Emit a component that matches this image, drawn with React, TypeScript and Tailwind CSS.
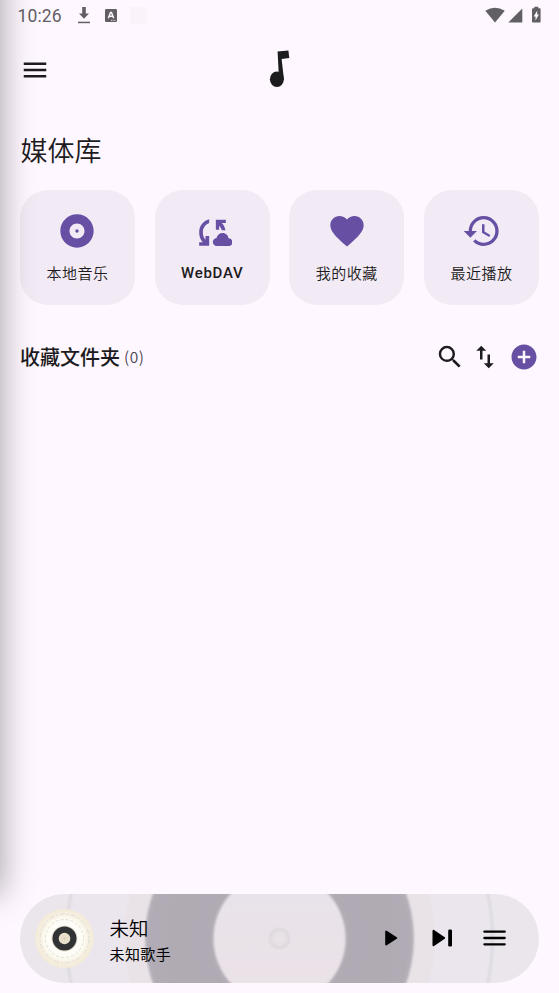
import React from "react";
import {
  MdAddCircle,
  MdAlbum,
  MdFavorite,
  MdHistory,
  MdImportExport,
  MdMenu,
  MdSearch,
} from "react-icons/md";

const CloudSyncIcon = ({ size, color }: { size: number; color: string }) => (
  <svg width={size} height={size} viewBox="5.5 3 120 120" fill={color}>
    <path d="M57 28v11C45 44 38 54 38 67c0 10 3 17 8 22V78h11v29H27V97h11C31 90 27 79 27 67c0-19 12-34 30-39z" />
    <path d="M77 29h30v10H95c6 6 9 13 11 22H95c-2-6-4-10-8-14v12H77z" />
    <path d="M80 108c-7 0-12-5-12-12 0-6 5-11 11-12 2-9 9-15 18-15 10 0 17 7 18 16 7 0 12 5 12 12 0 6-5 11-12 11z" />
  </svg>
);

const cards = [
  { label: "本地音乐", icon: MdAlbum },
  { label: "WebDAV", icon: CloudSyncIcon, latin: true },
  { label: "我的收藏", icon: MdFavorite },
  { label: "最近播放", icon: MdHistory },
];

const StatusBar = () => (
  <div className="flex h-[30px] items-center justify-between pl-[17.5px] pr-[16.5px] text-[#625f64]">
    <div className="flex items-center">
      <span className="w-[59.5px] text-[17.5px] leading-[30px] tracking-[0.15px] pt-[2px]">10:26</span>
      <svg className="h-[17px] w-[14px]" viewBox="0 0 14 17" fill="currentColor">
        <path d="M5.2 0h3.6v6.5h3.2L7 11.8 2 6.5h3.2z" />
        <path d="M1 14.7h12v1.5H1z" />
      </svg>
      <svg className="ml-[14px] h-[13px] w-[12px]" viewBox="0 0 12 13">
        <rect width="12" height="13" rx="1.2" fill="currentColor" />
        <path d="M3.3 9.3 5.5 3.5h1L8.7 9.3M4.2 7.3h3.6" fill="none" stroke="#fef7ff" strokeWidth="1.4" />
        <path d="M6 11.4h5" stroke="#fef7ff" strokeWidth="0.8" strokeDasharray="1 0.6" />
      </svg>
      <div className="ml-[13px] h-[17px] w-[17px] bg-[#faf4fa]" />
    </div>
    <svg className="h-[18px] w-[58px]" viewBox="0 0 58 18" fill="currentColor">
      <path d="M0.3 4.8Q10-1.2 19.8 4.8L10 16.5z" />
      <path d="M37.3 2.5v14H23.3z" />
      <path d="M49.3.7h4v1.6h1.5q.8 0 .8.8v12.6q0 .8-.8.8h-7q-.8 0-.8-.8V3.1q0-.8.8-.8h1.5z" />
      <path d="M52.2 4.7v3.8h1.7L50.5 14.5v-4.1h-1.9z" fill="#fef7ff" />
    </svg>
  </div>
);

const VinylBackdrop = () => (
  <svg className="absolute inset-0 h-full w-full" viewBox="0 0 519 89" preserveAspectRatio="none">
    <defs>
      <linearGradient id="label" x1="0" y1="0" x2="0" y2="1">
        <stop offset="0.15" stopColor="#e8e3ea" />
        <stop offset="0.8" stopColor="#eae2e7" />
      </linearGradient>
      <radialGradient id="vinyl" gradientUnits="userSpaceOnUse" cx="259.5" cy="44.5" r="137">
        <stop offset="0.46" stopColor="#b6b1b9" />
        <stop offset="0.52" stopColor="#afaab3" />
        <stop offset="0.94" stopColor="#b0abb4" />
        <stop offset="1" stopColor="#b9b4bc" />
      </radialGradient>
      <filter id="soft" x="-5%" y="-5%" width="110%" height="110%">
        <feGaussianBlur stdDeviation="1" />
      </filter>
    </defs>
    <rect width="519" height="89" fill="#eae6ec" />
    <g filter="url(#soft)">
      <circle cx="259.5" cy="44.5" r="209" fill="#ebe6ee" />
      <circle cx="259.5" cy="44.5" r="213" fill="none" stroke="#dad6de" strokeWidth="2.2" />
      <circle cx="259.5" cy="44.5" r="156" fill="#e9e3e8" />
      <circle cx="259.5" cy="44.5" r="134.5" fill="url(#vinyl)" />
      <circle cx="259.5" cy="44.5" r="66" fill="url(#label)" />
      <circle cx="259.5" cy="44.5" r="9.5" fill="#e6e0e5" stroke="#dad5da" strokeWidth="2" />
      <circle cx="259.5" cy="44.5" r="4" fill="#e9e3e7" />
    </g>
  </svg>
);

const Cover = () => (
  <svg className="h-[60px] w-[60px]" viewBox="0 0 60 60">
    <defs>
      <radialGradient id="disc">
        <stop offset="0.4" stopColor="#fffefa" />
        <stop offset="0.68" stopColor="#fdfbf1" />
        <stop offset="0.8" stopColor="#f7f1e3" />
        <stop offset="1" stopColor="#f3ead7" />
      </radialGradient>
    </defs>
    <circle cx="29.5" cy="29.5" r="29.5" fill="url(#disc)" />
    <g fill="none" stroke="#cbd0cb" strokeWidth="0.6">
      <circle cx="29.5" cy="29.5" r="24.5" strokeDasharray="5 2 2 2" />
      <circle cx="29.5" cy="29.5" r="19" strokeDasharray="3 2" />
    </g>
    <circle cx="29.5" cy="29.5" r="13" fill="#e5ddcf" />
    <circle cx="29.5" cy="29.5" r="12" fill="#303234" />
    <circle cx="29.5" cy="29.5" r="5.8" fill="#e8dfcb" />
    <circle cx="29.5" cy="29.5" r="0.8" fill="none" stroke="#c5bcae" strokeWidth="0.5" />
  </svg>
);

const Player = () => (
  <div className="relative flex h-[89px] items-center overflow-hidden rounded-full pl-[15px] pr-[32px] text-black">
    <VinylBackdrop />
    <div className="relative flex flex-1 items-center">
      <Cover />
      <div className="ml-[14.5px] pt-[5px]">
        <div className="text-[19.5px] leading-[27px] font-[350]">未知</div>
        <div className="text-[15px] leading-[24px] tracking-[0.4px]">未知歌手</div>
      </div>
    </div>
    <svg className="relative -top-[0.5px] h-[18px] w-[125px]" viewBox="0 0 125 18" fill="#000">
      <path d="M4.2 2.6v12.8L14.2 9z" stroke="#000" strokeWidth="2" strokeLinejoin="round" />
      <path d="M51.5 1.8v14.4L62.2 9z" stroke="#000" strokeWidth="2" strokeLinejoin="round" />
      <rect x="66.2" y="0.5" width="3.8" height="17" rx="1.2" />
      <path d="M102.4 2.7h20.3M102.4 9h20.3M102.4 15.3h20.3" stroke="#000" strokeWidth="2.3" strokeLinecap="round" />
    </svg>
  </div>
);

export default function App() {
  return (
    <div className="relative flex h-[993px] w-[559px] flex-col overflow-hidden bg-[#fef7ff] font-['Roboto','Noto_Sans_CJK_SC',sans-serif] text-[#1d1b20]">
      <StatusBar />

      <header className="grid h-[78px] grid-cols-3 items-center px-[20px]">
        <MdMenu size={30} className="mt-px" />
        <svg className="h-[38px] w-[21px] justify-self-center" viewBox="0 0 21 38" fill="#1c1b1d">
          <path d="M8.6 1.4 19.4.5 20.3 8 12.6 8.9 14.9 29H10z" />
          <ellipse cx="7.9" cy="29.2" rx="7" ry="7.7" />
        </svg>
      </header>

      <main className="flex-1 px-[20px] pt-[24px]">
        <h1 className="pl-[0.5px] text-[27px] leading-[40px] font-[350]">媒体库</h1>

        <div className="mt-[18px] grid grid-cols-4 gap-[19.7px]">
          {cards.map(({ label, icon: Icon, latin }) => (
            <div key={label} className="flex h-[115px] flex-col items-center rounded-[28px] bg-[#f2ebf6] pt-[21px]">
              <Icon size={40} color="#6750a4" />
              <span
                className={`text-[15px] leading-[22px] whitespace-nowrap ${
                  latin ? "mt-[10.5px] font-medium tracking-[0.7px]" : "mt-[11.5px] font-[350] tracking-[0.5px]"
                }`}
              >
                {label}
              </span>
            </div>
          ))}
        </div>

        <div className="mt-[37px] flex h-[30px] items-center">
          <h2 className="pt-[2px] text-[20px] leading-[30px] font-medium">收藏文件夹</h2>
          <span className="ml-[4px] -mt-[2px] font-['Noto_Sans_CJK_SC',sans-serif] text-[15.5px] leading-[30px] font-[350] tracking-[0.5px] text-[#49454f]">
            (0)
          </span>
          <div className="ml-auto flex items-center">
            <MdSearch size={30} />
            <MdImportExport size={30} className="-mt-[1px] ml-[5px]" />
            <MdAddCircle size={30} color="#6750a4" className="ml-[9px]" />
          </div>
        </div>
      </main>

      <footer className="px-[20px] pb-[10px]">
        <Player />
      </footer>

      {/* edge of the closed drawer */}
      <div className="pointer-events-none absolute -left-[100px] top-[-40px] h-[932px] w-[100px] shadow-[0_0_30px_2px_rgba(0,0,0,0.34)]" />
    </div>
  );
}
